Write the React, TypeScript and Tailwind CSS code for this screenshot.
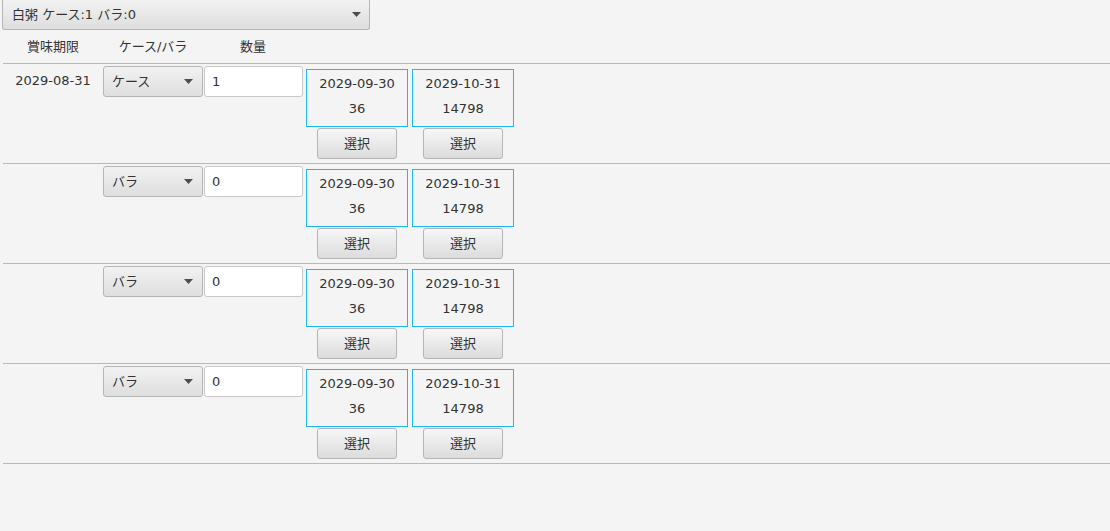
import React from "react";

const font = { fontFamily: '"DejaVu Sans", "Noto Sans CJK JP", sans-serif' };

function Arrow() {
  return (
    <svg width="9" height="5" viewBox="0 0 9 5">
      <path d="M0 0 H9 L4.5 5 Z" fill="#4d4d4d" />
    </svg>
  );
}

function Combo({ label }: { label: string }) {
  return (
    <div className="flex h-[31px] w-[100px] items-center justify-between rounded-[3px] border border-[#b5b5b5] bg-gradient-to-b from-[#f2f2f2] to-[#dedede] pl-[8px] pr-[9px] text-[13px] text-[#333]">
      <span>{label}</span>
      <Arrow />
    </div>
  );
}

function Lot({ date, qty }: { date: string; qty: string }) {
  return (
    <div className="flex w-[102px] flex-col items-center">
      <div className="mt-[5px] flex h-[58px] w-[102px] flex-col items-center border border-[#1cb8f0] pt-[1px] text-[13px] leading-[25px] text-[#333]">
        <span>{date}</span>
        <span>{qty}</span>
      </div>
      <button className="mt-[1px] h-[31px] w-[80px] rounded-[3px] border border-[#b5b5b5] bg-gradient-to-b from-[#f7f7f7] to-[#dcdcdc] text-[13px] text-[#333]">
        選択
      </button>
    </div>
  );
}

function Row({ first, kind, qty }: { first?: string; kind: string; qty: string }) {
  return (
    <div className="flex h-[100px] border-t border-[#b9b9b9]">
      <div className="w-[100px] pt-[7px] text-center text-[13px] text-[#333]">{first ?? ""}</div>
      <div className="pt-[2px]">
        <Combo label={kind} />
      </div>
      <div className="pt-[2px] pl-[1px]">
        <div className="flex h-[31px] w-[99px] items-center rounded-[3px] border border-[#c9c9c9] bg-white pl-[7px] text-[13px] text-[#333]">
          {qty}
        </div>
      </div>
      <div className="ml-[3px] flex gap-[4px]">
        <Lot date="2029-09-30" qty="36" />
        <Lot date="2029-10-31" qty="14798" />
      </div>
    </div>
  );
}

export default function App() {
  return (
    <div className="h-[531px] w-[1110px] bg-[#f4f4f4]" style={font}>
      <div className="pl-[2px]">
        <div className="flex h-[30px] w-[368px] items-center justify-between rounded-b-[3px] border border-t-0 border-[#b5b5b5] bg-gradient-to-b from-[#f2f2f2] to-[#dedede] pl-[9px] pr-[8px] text-[13px] text-[#333]">
          <span>白粥 ケース:1 バラ:0</span>
          <Arrow />
        </div>
      </div>
      <div className="ml-[3px]">
        <div className="flex h-[33px] items-center text-[13px] text-[#333]">
          <div className="w-[100px] text-center">賞味期限</div>
          <div className="w-[100px] text-center">ケース/バラ</div>
          <div className="w-[100px] text-center">数量</div>
        </div>
        <Row first="2029-08-31" kind="ケース" qty="1" />
        <Row kind="バラ" qty="0" />
        <Row kind="バラ" qty="0" />
        <Row kind="バラ" qty="0" />
        <div className="border-t border-[#b9b9b9]" />
      </div>
    </div>
  );
}
